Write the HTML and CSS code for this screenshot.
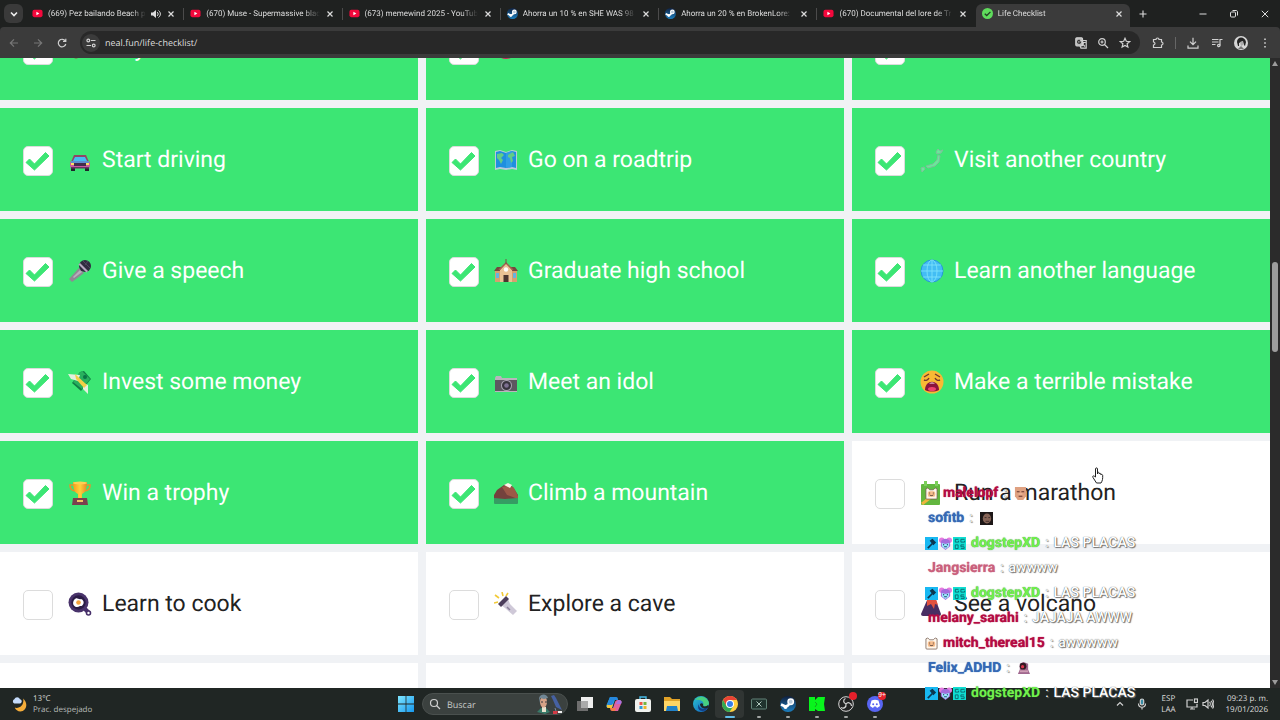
FILE: index.html
```html
<!DOCTYPE html>
<html lang="es">
<head>
<meta charset="utf-8">
<title>Life Checklist</title>
<link rel="stylesheet" href="styles.css">
</head>
<body>
<svg class="sprites" aria-hidden="true">
  <defs>
    <linearGradient id="gGold" x1="0" y1="0" x2="1" y2="0"><stop offset="0" stop-color="#f79a1c"/><stop offset=".5" stop-color="#ffd23a"/><stop offset="1" stop-color="#e8842a"/></linearGradient>
    <linearGradient id="gWin" x1="0" y1="0" x2="1" y2="1"><stop offset="0" stop-color="#7fe6ff"/><stop offset="1" stop-color="#1698ee"/></linearGradient>
    <linearGradient id="gSteam" x1="0" y1="0" x2="0" y2="1"><stop offset="0" stop-color="#10203f"/><stop offset="1" stop-color="#1b7fc0"/></linearGradient>
    <linearGradient id="gEdge" x1="0" y1="0" x2="1" y2="1"><stop offset="0" stop-color="#2bc3d2"/><stop offset="1" stop-color="#0f5cc0"/></linearGradient>
  </defs>
  <symbol id="yt" viewBox="0 0 12 12"><rect x="0.500" y="2" width="11" height="8" rx="2" fill="#f4083c"/><path d="M4.800 4.200 8 6 4.800 7.800z" fill="#fff"/></symbol>
  <symbol id="steam" viewBox="0 0 16 16"><circle cx="8" cy="8" r="8" fill="url(#gSteam)"/><path d="M1 8.500l4.500 2 2.500-1 2.500-3.500" stroke="#fff" stroke-width="2.600" fill="none"/><circle cx="10.700" cy="5.800" r="2.700" fill="#b8cbdc" stroke="#fff" stroke-width="1.500"/><circle cx="5.500" cy="11" r="2" fill="#fff"/></symbol>
  <symbol id="x" viewBox="0 0 12 12"><path d="M3.500 3.500l5 5m0-5l-5 5" stroke="#dcdcdc" stroke-width="1.200" fill="none"/></symbol>
  <symbol id="check" viewBox="0 0 30 30"><path d="M3 16.500l3.500-3.500 5 5L22.500 6.500 26 10 11.500 24z" fill="#3ce674" stroke="#3ce674" stroke-width="1" stroke-linejoin="round"/></symbol>
  <symbol id="violin" viewBox="0 0 24 24"><path d="M18 1l3 3-9 9-3-3z" fill="#3d2921"/><ellipse cx="8" cy="16" rx="5" ry="5.500" fill="#8b4b2b"/><path d="M17 20h5v-1h-5z" fill="#284638"/></symbol>
  <symbol id="heart" viewBox="0 0 24 24"><ellipse cx="12" cy="12" rx="11" ry="10" fill="#cf2159"/></symbol>
  <symbol id="train" viewBox="0 0 24 24"><rect x="1" y="3" width="22" height="18" rx="2" fill="#3aa0d8"/><path d="M18 18h4v2h-4z" fill="#e2b878"/></symbol>
  <symbol id="car" viewBox="0 0 24 24"><path d="M3 18h4v5H3zM17 18h4v5h-4z" fill="#20242c"/><path d="M6 7h12l3 7H3z" fill="#914665"/><path d="M7 9h10l2 4H5z" fill="#45bdf2"/><rect x="2" y="13" width="20" height="7" rx="2" fill="#c85a9f"/><path d="M3 13h18v2H3z" fill="#5e8fd0"/><path d="M6 15h12v3H6z" fill="#442c4d"/><path d="M3 15h3v2H3zM18 15h3v2h-3z" fill="#ffe062"/><path d="M3 19h18v1.500H3z" fill="#663564"/></symbol>
  <symbol id="map" viewBox="0 0 24 24"><path d="M1 3l5-1 6 2 6-2 5 1v19l-5-1-6 1-6-1-5 1z" fill="#b9cbd9"/><path d="M2 4l4-1 6 2 6-2 4 1v16l-4-1-6 1-6-1-4 1z" fill="#1e8fdf"/><path d="M12 5l6-2v16l-6 1z" fill="#2f9ee4"/><path d="M3 6l5-1 2 2-3 3 2 2-2 4-2-4-2-2zM14 7l5-3 2 4-3 1 1 4-2 2-1-5-2-1z" fill="#61cd86"/></symbol>
  <symbol id="islands" viewBox="0 0 24 24"><path d="M18 1l2 2 3-1-2 3-4 1-1-2zM18 7l2 1-1 6-4 4-7 2-2-2 7-2 4-4zM1 20l3-1 1 2-3 3z" fill="#6ae89a" stroke="#7fbf9a" stroke-width="1"/></symbol>
  <symbol id="mic" viewBox="0 0 24 24"><path d="M11 9l5 5-12 9-3-3z" fill="#8f8894"/><path d="M12 11l2 2-8 6-1-1z" fill="#b8aebc"/><circle cx="17" cy="7" r="6" fill="#302b40"/><path d="M12 4l8 8-1.500 1.500-8-8z" fill="#b7a9c1"/><path d="M15 2l7 7M20 2l-3 4" stroke="#4f4860"/></symbol>
  <symbol id="school" viewBox="0 0 24 24"><path d="M1 12h22v11H1z" fill="#d6a06f"/><path d="M0 12l3-4h7v4zM14 8h7l3 4h-8z" fill="#75473f"/><path d="M6 11l6-7 6 7v12H6z" fill="#eac194"/><path d="M5 11l7-7 7 7" fill="none" stroke="#a0604f" stroke-width="1.500"/><path d="M12 0v5" stroke="#775344"/><circle cx="12" cy="10.500" r="2.200" fill="#fff"/><path d="M9.500 16h5v7h-5z" fill="#4b342f"/><path d="M2 14h3v5H2zM19 14h3v5h-3z" fill="#66b2e0"/></symbol>
  <symbol id="globe" viewBox="0 0 24 24"><circle cx="12" cy="12" r="11" fill="#43bdf4" stroke="#2897d9"/><g fill="none" stroke="#7be0fb" stroke-width=".9"><ellipse cx="12" cy="12" rx="5" ry="11"/><path d="M12 1v22M1 12h22M3 6h18M3 18h18"/></g></symbol>
  <symbol id="money" viewBox="0 0 24 24"><path d="M12 2l4-1 7 8-10 12-9-8z" fill="#107e45"/><path d="M11 3l3-2 8 8-8 10-9-7z" fill="#28b15e"/><path d="M0 4l12 1-2 6-7-2zM15 13l5 2v9l-5-5z" fill="#e5efdf"/><path d="M7 4l12 11-3 3L8 9z" fill="#f2cf46"/><circle cx="17" cy="7" r="2" fill="#087545"/></symbol>
  <symbol id="camera" viewBox="0 0 24 24"><path d="M2 6h5l1 2h15v14H1V8z" fill="#b9b5bd"/><path d="M1 10h22v11H1z" fill="#5d5860"/><circle cx="12.500" cy="15.500" r="5.500" fill="#aaa4b2"/><circle cx="12.500" cy="15.500" r="4.500" fill="#37343d"/><circle cx="12.500" cy="15.500" r="2.300" fill="#7d7091"/></symbol>
  <symbol id="weary" viewBox="0 0 24 24"><circle cx="12" cy="12" r="11.500" fill="#f9b934"/><path d="M4 7l5-3M15 4l5 3M4 10c2 1 4 0 5-2M15 8c1 2 3 3 5 2" stroke="#70372f" stroke-width="1.400" fill="none"/><path d="M5 20c0-11 14-11 14 0-4 2-10 2-14 0" fill="#8a153c"/><path d="M9 13.500c2-1.500 4-1.500 6 0z" fill="#fff"/><ellipse cx="12" cy="19" rx="4" ry="2" fill="#ef416e"/></symbol>
  <symbol id="trophy" viewBox="0 0 24 24"><path d="M5 4H2c0 5 3 6 6 6m11-6h3c0 5-3 6-6 6" fill="none" stroke="#e3932e" stroke-width="1.600"/><path d="M5 1h14c0 9-3 11-5 12v4h-4v-4C8 12 5 10 5 1z" fill="url(#gGold)"/><ellipse cx="12" cy="2" rx="7" ry="1.500" fill="#ffce54"/><path d="M5 17h14l1 7H4z" fill="#7b414e"/><path d="M9 19h6v2H9z" fill="#f2c562"/></symbol>
  <symbol id="mountain" viewBox="0 0 24 24"><path d="M0 22V14l3-5 7-5 4-1 5 3 5 8v8z" fill="#74413d"/><path d="M8 6l7-2 5 3 4 8v3L13 14z" fill="#9c5847"/><path d="M10 4l4-2 4 2-2 3z" fill="#fff1e7"/><path d="M0 17l11 1 13-1v5q0 1-1 1H1q-1 0-1-1z" fill="#359c63"/></symbol>
  <symbol id="runner" viewBox="0 0 24 24"><rect x="1" y="3" width="19" height="21" rx="1" fill="#62b63f"/><path d="M2 23l9-7" stroke="#edb63d" stroke-width="3"/><path d="M4 0h3v5H4zM15 0h3v5h-3z" fill="#7bcf59"/></symbol>
  <symbol id="pan" viewBox="0 0 24 24"><path d="M17 17l4 4" stroke="#47306a" stroke-width="4"/><circle cx="20.500" cy="21" r="2" fill="#fff" stroke="#47306a" stroke-width="1.600"/><circle cx="10.500" cy="10.500" r="10" fill="#49336b"/><circle cx="10.500" cy="10.500" r="7.200" fill="#2b1c45"/><path d="M6 8c3-4 4 0 7-1 5 2 2 8-1 7-4 3-9-1-6-6" fill="#fff"/><circle cx="10.500" cy="10.500" r="2.300" fill="#f5a33c"/></symbol>
  <symbol id="torch" viewBox="0 0 24 24"><path d="M5 6L1 3M9 4L8 0M12 4l2-3M4 10l-4 1" stroke="#f2ca36" stroke-width="1.600"/><path d="M7 13l7-6 2 5 7 7-4 4-8-7z" fill="#cfc9d8"/><path d="M4 12l8-8 3 3-8 8z" fill="#4c3e5b"/><path d="M13 15l3 3" stroke="#8b819b" stroke-width="1.500"/></symbol>
  <symbol id="volcano" viewBox="0 0 24 24"><path d="M8 6h7l6 16q0 2-2 2H3q-2 0-2-2z" fill="#492e63"/><path d="M7 7c2-6 7-5 9 0l2 6-3-1-1 5-3-5-4 2z" fill="#e2523f"/></symbol>
  <symbol id="finn" viewBox="0 0 14 14"><path d="M1 2l2-1 2 2h4l2-2 2 1v10q0 1-1 1H2q-1 0-1-1z" fill="#fff7ec" stroke="#70584b" stroke-width=".8"/><rect x="3" y="4.500" width="8" height="6" rx="2" fill="#f8bd8c"/><path d="M5 6v1M9 6v1M5 8.500c1 1 3 1 4 0" stroke="#443432" fill="none"/></symbol>
  <symbol id="hammer" viewBox="0 0 14 14"><path d="M0 0h14v14H0z" fill="#18b8f2"/><path d="M3 12l5-5" stroke="#0b3650" stroke-width="1.800"/><path d="M5 4l3-2 4 4-3 3z" fill="#0b3650"/></symbol>
  <symbol id="bear" viewBox="0 0 14 14"><circle cx="3" cy="3.500" r="3" fill="#e67ae0"/><circle cx="11" cy="3.500" r="3" fill="#e67ae0"/><path d="M2 5c2-4 8-4 10 0v5l-5 4-5-4z" fill="#a46ddc"/><path d="M3 6.500l4 1 4-1-.5 4L7 13l-3.500-2.500z" fill="#9cecff"/><path d="M5 7.500V9M9 7.500V9M5.500 10.500h3" stroke="#203663"/></symbol>
  <symbol id="og" viewBox="0 0 14 14"><path d="M0 0h14v14H0z" fill="#10ded2"/><path d="M6 2.500H2.500v3H6v-1.500M12.500 2.500H8.500v3h4V4M2.500 8.500v4H5.500v-4zM12 8.500H8.500v2h3.500v2H8.500" fill="none" stroke="#0a6a70" stroke-width="1"/></symbol>
  <symbol id="emoteFace" viewBox="0 0 14 14"><path d="M1 0h12v10l-3 4H4L1 10z" fill="#dfa181"/><path d="M3 5h3M8 5h3M5 10h4" stroke="#64352e" stroke-width="1.100"/><path d="M5 7.500h4" stroke="#f7c5a6"/></symbol>
  <symbol id="emoteDark" viewBox="0 0 14 14"><path d="M0 0h14v14H0z" fill="#1d1717"/><ellipse cx="7.500" cy="7" rx="4.500" ry="5.500" fill="#866457"/><path d="M5 6h2M9 6h2M6 10h4" stroke="#3c2d2b"/></symbol>
  <symbol id="emotePurple" viewBox="0 0 14 14"><path d="M3 2l4-2 5 2v6l2 5H1l2-5z" fill="#a0688f"/><circle cx="6.500" cy="4.500" r="3.600" fill="#331923"/><circle cx="6" cy="5" r="1.700" fill="#df354e"/><path d="M3 10h9" stroke="#cf9eb5" stroke-width="2"/></symbol>
</svg>

<header class="browser">
  <div class="tabstrip">
    <button class="tab-search" aria-label="Buscar pestañas"><svg viewBox="0 0 12 12"><path d="M3 4.500l3 3 3-3" fill="none" stroke="#eee" stroke-width="1.600"/></svg></button>
    <nav class="tabs" aria-label="Pestañas">
      <div class="tab"><svg class="fav"><use href="#yt"/></svg><button class="title">(669) Pez bailando Beach pa</button><svg class="audio" viewBox="0 0 12 12"><path d="M2 4.500h2L7 2v8L4 7.500H2z" fill="#ddd"/><path d="M8 4c1.500 1 1.500 3 0 4M9.500 2.500c2.500 2 2.500 5 0 7" fill="none" stroke="#ddd"/></svg><button class="close" aria-label="Cerrar"><svg><use href="#x"/></svg></button><span class="divider"></span></div>
      <div class="tab"><svg class="fav"><use href="#yt"/></svg><button class="title">(670) Muse - Supermassive blac</button><button class="close" aria-label="Cerrar"><svg><use href="#x"/></svg></button><span class="divider"></span></div>
      <div class="tab"><svg class="fav"><use href="#yt"/></svg><button class="title">(673) memewind 2025 - YouTub</button><button class="close" aria-label="Cerrar"><svg><use href="#x"/></svg></button><span class="divider"></span></div>
      <div class="tab"><svg class="fav"><use href="#steam"/></svg><button class="title">Ahorra un 10 % en SHE WAS 98</button><button class="close" aria-label="Cerrar"><svg><use href="#x"/></svg></button><span class="divider"></span></div>
      <div class="tab"><svg class="fav"><use href="#steam"/></svg><button class="title">Ahorra un 20 % en BrokenLore:</button><button class="close" aria-label="Cerrar"><svg><use href="#x"/></svg></button><span class="divider"></span></div>
      <div class="tab"><svg class="fav"><use href="#yt"/></svg><button class="title">(670) Documental del lore de Tr</button><button class="close" aria-label="Cerrar"><svg><use href="#x"/></svg></button><span class="divider hidden"></span></div>
      <div class="tab active"><svg class="fav" viewBox="0 0 12 12"><circle cx="6" cy="6" r="6" fill="#5fdc5c"/><path d="M3 6.200l2.200 2 4-4" fill="none" stroke="#243c26" stroke-width="1.400"/></svg><button class="title">Life Checklist</button><button class="close" aria-label="Cerrar"><svg><use href="#x"/></svg></button></div>
    </nav>
    <button class="new-tab" aria-label="Nueva pestaña"><svg viewBox="0 0 12 12"><path d="M6 2.500v7M2.500 6h7" stroke="#ddd" stroke-width="1.100"/></svg></button>
    <div class="window-controls">
      <button aria-label="Minimizar"><svg viewBox="0 0 12 12"><path d="M2.500 6h7" stroke="#ddd"/></svg></button>
      <button aria-label="Restaurar"><svg viewBox="0 0 12 12"><rect x="2.500" y="4" width="5" height="5" rx="1" fill="none" stroke="#ddd"/><path d="M4.500 2.500H8c1 0 1.500.5 1.500 1.500v3.500" fill="none" stroke="#ddd"/></svg></button>
      <button aria-label="Cerrar ventana"><svg viewBox="0 0 12 12"><path d="M2.800 2.800l6.400 6.400m0-6.400L2.800 9.200" stroke="#ddd"/></svg></button>
    </div>
  </div>
  <div class="toolbar">
    <button class="tool dim" aria-label="Atrás"><svg viewBox="0 0 12 12"><path d="M10 6H2.500M6 2.300 2.300 6 6 9.700"/></svg></button>
    <button class="tool dim" aria-label="Adelante"><svg viewBox="0 0 12 12"><path d="M2 6h7.500M6 2.300 9.700 6 6 9.700"/></svg></button>
    <button class="tool" aria-label="Recargar"><svg viewBox="0 0 12 12"><path d="M9.300 4A3.800 3.800 0 1 0 9.800 7M9.800 1.800v2.700H7"/></svg></button>
    <div class="address">
      <button class="site" aria-label="Información del sitio"><svg viewBox="0 0 12 12"><circle cx="3.300" cy="3.500" r="1.400"/><path d="M6 3.500h4.500M1.500 8.500H6"/><circle cx="8.700" cy="8.500" r="1.400"/></svg></button>
      <input type="text" aria-label="Dirección" value="neal.fun/life-checklist/">
      <button class="tool" aria-label="Traducir"><svg viewBox="0 0 12 12"><rect x=".8" y=".8" width="6.700" height="8" rx="1" fill="#bbb"/><path d="M5.500 3.500h5.700v7.700H6l-1-2.400M7 5.500h3.500M8.700 4.800c0 2-1 3-2 4M7.500 7l2.500 2.500"/><path d="M5.500 4.800H4.200M5.600 4.800A1.500 1.500 0 1 1 5 3.600" stroke="#333"/></svg></button>
      <button class="tool" aria-label="Zoom"><svg viewBox="0 0 12 12"><circle cx="5" cy="5" r="3.300"/><path d="M7.500 7.500l3.500 3.500M5 3.500v3M3.500 5h3"/></svg></button>
      <button class="tool" aria-label="Favorito"><svg viewBox="0 0 12 12"><path d="M6 1.300l1.300 3 3.300.3-2.500 2.200.8 3.300L6 8.400l-2.900 1.700.8-3.300L1.400 4.600l3.300-.3z"/></svg></button>
    </div>
    <button class="tool" aria-label="Extensiones"><svg viewBox="0 0 12 12"><path d="M1.500 2.500H4c0-2 3-2 3 0h2.500V5c2 0 2 3 0 3v2.500h-8V8c2-.5 2-2.500 0-3z"/></svg></button>
    <span class="divider"></span>
    <button class="tool" aria-label="Descargas"><svg viewBox="0 0 12 12"><path d="M6 .8v6.500M3 4.600l3 3 3-3M1 8.500v2.700h10V8.500"/></svg></button>
    <button class="tool" aria-label="Multimedia"><svg viewBox="0 0 12 12"><path d="M1 2.500h6.500M1 5h6.500M1 7.500h3.500M9 8.500v-6h2.500"/><circle cx="7.800" cy="8.500" r="1.200"/></svg></button>
    <button class="tool avatar" aria-label="Perfil"><svg viewBox="0 0 14 14"><circle cx="7" cy="7" r="7" fill="#d6d6d6" stroke="none"/><path d="M3 6c0-6 8-6 9 0l-1 4-1-1-1-4-4 2v3H4z" fill="#252525" stroke="none"/><path d="M6 6l3-1v4l-2 1z" fill="#aaa" stroke="none"/><path d="M4 13l3-3 3 3z" fill="#777" stroke="none"/></svg></button>
    <button class="tool" aria-label="Menú"><svg viewBox="0 0 12 12"><path d="M6 1.500v1.600M6 5.200v1.600M6 8.900v1.600" stroke-width="1.600"/></svg></button>
  </div>
</header>

<main class="viewport">
  <div class="page">
    <div class="checklist">
      <label class="item"><span class="box"><input type="checkbox" checked><svg><use href="#check"/></svg></span><svg class="emoji"><use href="#violin"/></svg><span>Play an instrument</span></label>
      <label class="item"><span class="box"><input type="checkbox" checked><svg><use href="#check"/></svg></span><svg class="emoji"><use href="#heart"/></svg><span>Fall in love</span></label>
      <label class="item"><span class="box"><input type="checkbox" checked><svg><use href="#check"/></svg></span><svg class="emoji"><use href="#train"/></svg><span>Ride a train</span></label>
      <label class="item"><span class="box"><input type="checkbox" checked><svg><use href="#check"/></svg></span><svg class="emoji"><use href="#car"/></svg><span>Start driving</span></label>
      <label class="item"><span class="box"><input type="checkbox" checked><svg><use href="#check"/></svg></span><svg class="emoji"><use href="#map"/></svg><span>Go on a roadtrip</span></label>
      <label class="item"><span class="box"><input type="checkbox" checked><svg><use href="#check"/></svg></span><svg class="emoji"><use href="#islands"/></svg><span>Visit another country</span></label>
      <label class="item"><span class="box"><input type="checkbox" checked><svg><use href="#check"/></svg></span><svg class="emoji"><use href="#mic"/></svg><span>Give a speech</span></label>
      <label class="item"><span class="box"><input type="checkbox" checked><svg><use href="#check"/></svg></span><svg class="emoji"><use href="#school"/></svg><span>Graduate high school</span></label>
      <label class="item"><span class="box"><input type="checkbox" checked><svg><use href="#check"/></svg></span><svg class="emoji"><use href="#globe"/></svg><span>Learn another language</span></label>
      <label class="item"><span class="box"><input type="checkbox" checked><svg><use href="#check"/></svg></span><svg class="emoji"><use href="#money"/></svg><span>Invest some money</span></label>
      <label class="item"><span class="box"><input type="checkbox" checked><svg><use href="#check"/></svg></span><svg class="emoji"><use href="#camera"/></svg><span>Meet an idol</span></label>
      <label class="item"><span class="box"><input type="checkbox" checked><svg><use href="#check"/></svg></span><svg class="emoji"><use href="#weary"/></svg><span>Make a terrible mistake</span></label>
      <label class="item"><span class="box"><input type="checkbox" checked><svg><use href="#check"/></svg></span><svg class="emoji"><use href="#trophy"/></svg><span>Win a trophy</span></label>
      <label class="item"><span class="box"><input type="checkbox" checked><svg><use href="#check"/></svg></span><svg class="emoji"><use href="#mountain"/></svg><span>Climb a mountain</span></label>
      <label class="item"><span class="box"><input type="checkbox"><svg><use href="#check"/></svg></span><svg class="emoji"><use href="#runner"/></svg><span>Run a marathon</span></label>
      <label class="item"><span class="box"><input type="checkbox"><svg><use href="#check"/></svg></span><svg class="emoji"><use href="#pan"/></svg><span>Learn to cook</span></label>
      <label class="item"><span class="box"><input type="checkbox"><svg><use href="#check"/></svg></span><svg class="emoji"><use href="#torch"/></svg><span>Explore a cave</span></label>
      <label class="item"><span class="box"><input type="checkbox"><svg><use href="#check"/></svg></span><svg class="emoji"><use href="#volcano"/></svg><span>See a volcano</span></label>
      <div class="item"></div><div class="item"></div><div class="item"></div>
    </div>
  </div>
  <div class="scrollbar" aria-hidden="true">
    <svg viewBox="0 0 10 10"><path d="M5 3l3 5H2z" fill="#9b9b9b"/></svg>
    <span class="before"></span><span class="thumb"></span><span class="after"></span>
    <svg viewBox="0 0 10 10"><path d="M5 7L2 2h6z" fill="#9b9b9b"/></svg>
  </div>
</main>

<footer class="taskbar">
  <button class="weather">
    <svg viewBox="0 0 16 16"><path d="M12 2c6 6 3 14-3 14-3 0-5-2-6-4 6 1 10-3 9-10z" fill="#f5ad3a"/><path d="M2.500 7.500a2.400 2.400 0 0 1 0-4.500c1-3 5-3 6 0 2.500.5 2.500 4 0 4.500z" fill="#c4dafa"/></svg>
    <span>13°C<br><small>Prac. despejado</small></span>
  </button>
  <div class="dock">
    <button class="app" aria-label="Inicio"><svg viewBox="0 0 16 16"><path d="M0 0h7.600v7.600H0zM8.400 0H16v7.600H8.400zM0 8.400h7.600V16H0zM8.400 8.400H16V16H8.400z" fill="url(#gWin)"/></svg></button>
    <label class="search"><svg class="lens" viewBox="0 0 12 12"><circle cx="5" cy="5" r="3.500"/><path d="M7.500 7.500l3.500 3.500"/></svg><input type="text" placeholder="Buscar" aria-label="Buscar"><svg class="art" viewBox="0 0 28 20"><path d="M2 18l4-4h5l4 4-5 2z" fill="#397b6a"/><path d="M7 13h4v5H7z" fill="#e8e2ce"/><ellipse cx="8.500" cy="8" rx="3.500" ry="5.500" fill="#d7a287"/><path d="M4 9V4c2-5 8-4 9 0l-4 1-4-1z" fill="#718795"/><path d="M6 8h2m2 0h2" stroke="#393b41"/><path d="M16 2l3-1 2 3 6 12-6-3-3-7z" fill="#4661a2"/><path d="M20 14l1 3" stroke="#78849b"/><path d="M18 17h5l-1 3h-4z" fill="#d23b46"/><path d="M23 17h4v2h-4z" fill="#eee"/></svg></label>
    <button class="app" aria-label="Vista de tareas"><svg viewBox="0 0 16 16"><rect x="4" y="1" width="12" height="11" fill="#eee"/><rect y="5" width="11" height="10" fill="#777" opacity=".9"/><path d="M4 5h7v7H4z" fill="#aaa"/></svg></button>
    <button class="app" aria-label="Copilot"><svg viewBox="0 0 16 16"><path d="M4 1h6L6 12H3c-3 0-3-2-2-4z" fill="#26a5e4"/><path d="M1 8h6l-1 4H3c-3 0-2-2-2-4z" fill="#f4c63d"/><path d="M4 1h6c2 0 2 2 2 3H8L6 9H1z" fill="#2688dd"/><path d="M12 4c4 0 4 2 3 4l-3 7H6l3-9c.5-1 1-2 3-2z" fill="#e0619f"/><path d="M4 12h6l-1 3H6c-1 0-2-1-2-3z" fill="#f47a48"/><path d="M12 4c4 0 4 2 3 4h-5z" fill="#a972df"/></svg></button>
    <button class="app" aria-label="Tienda"><svg viewBox="0 0 16 16"><path d="M5 4V1h6v3" fill="none" stroke="#48bce7" stroke-width="1.400"/><rect x="0" y="3" width="16" height="13" rx="2" fill="#f0f2ef"/><path d="M4.500 6h3v3h-3z" fill="#ef5547"/><path d="M8.500 6h3v3h-3z" fill="#74b643"/><path d="M4.500 10h3v3h-3z" fill="#2f9bd5"/><path d="M8.500 10h3v3h-3z" fill="#eeb62c"/></svg></button>
    <button class="app" aria-label="Explorador"><svg viewBox="0 0 16 16"><path d="M0 1h6l2 2h8v12H0z" fill="#e1a227"/><path d="M0 5h16v10H0z" fill="#ffd565"/><path d="M3 10h10l1 5H2z" fill="#2182c9"/></svg></button>
    <button class="app" aria-label="Edge"><svg viewBox="0 0 16 16"><circle cx="8" cy="8" r="8" fill="url(#gEdge)"/><path d="M2 4C7-2 15 1 16 7c0 4-5 4-6 2 2-4-4-6-8-5z" fill="#48cf81"/><path d="M6 8c-1 5 5 6 9 3l-2 3C8 17 3 13 6 8z" fill="#133f87"/><path d="M7 8c2-2 4 0 3 2 2 1 4 0 5-1l1 2c-4 3-9 1-9-3z" fill="#202726"/></svg></button>
    <button class="app current" aria-label="Chrome"><svg viewBox="0 0 16 16"><circle cx="8" cy="8" r="8" fill="#ffce3e"/><path d="M1.100 4A8 8 0 0 1 15 4H8L4.500 10z" fill="#e94335"/><path d="M1.100 4A8 8 0 0 0 7.500 16l4-6H4.500z" fill="#32a754"/><circle cx="8" cy="8" r="4" fill="#fff"/><circle cx="8" cy="8" r="3" fill="#367ee8"/></svg></button>
    <button class="app open" aria-label="Consola"><svg viewBox="0 0 16 16"><rect x=".5" y="3" width="15" height="10" rx="1" fill="#20332e" stroke="#638378"/><path d="M5.500 5.500l5 5m0-5l-5 5" stroke="#b1c7bd"/></svg></button>
    <button class="app open" aria-label="Steam"><svg><use href="#steam"/></svg></button>
    <button class="app open" aria-label="Kick"><svg viewBox="0 0 16 16"><path d="M0 1h6v3l3-3h7l-1 7 1 7H9l-3-2v2H0z" fill="#08f51c"/><path d="M6 6l2 2-2 3" stroke="#14a51d" fill="none"/></svg></button>
    <button class="app open" aria-label="OBS"><svg viewBox="0 0 16 16"><circle cx="8" cy="8" r="7.300" fill="#222" stroke="#d7d7d7"/><path d="M8 8C5 7 5 3.500 7.500 2.500M8 8c2-2.500 5.500-1 5.500 2M8 8c.5 3.500-2.500 5-5 3.500" fill="none" stroke="#d7d7d7" stroke-width="1.200"/></svg><span class="badge"></span></button>
    <button class="app open" aria-label="Discord"><svg viewBox="0 0 16 16"><circle cx="8" cy="8" r="8" fill="#5865f2"/><path d="M4.500 4.500C7 3.500 9 3.500 11.500 4.500L13 10l-3 2-1-1.500H7L6 12l-3-2z" fill="#fff"/><circle cx="6.200" cy="8.200" r="1" fill="#5865f2"/><circle cx="9.800" cy="8.200" r="1" fill="#5865f2"/></svg><span class="badge">9+</span></button>
  </div>
  <div class="tray">
    <button aria-label="Iconos ocultos"><svg viewBox="0 0 12 12"><path d="M3 7.500l3-3 3 3"/></svg></button>
    <button aria-label="Micrófono"><svg viewBox="0 0 12 12"><rect x="4.300" y="1" width="3.400" height="6" rx="1.700" fill="#368ca6"/><path d="M2.500 5.500c0 5 7 5 7 0M6 9.500v2"/></svg></button>
    <button class="lang">ESP<br>LAA</button>
    <button class="status" aria-label="Red y volumen"><svg viewBox="0 0 12 12"><path d="M7 2H1v7h10V6M4 11h5M6 9v2"/><rect x="8.500" y="1" width="3" height="3.500"/></svg><svg viewBox="0 0 12 12"><path d="M1 4.500h2L6 2v8L3 7.500H1zM7.500 4c1 1 1 3 0 4M9 2.800c2 2 2 4.500 0 6.400M10.500 1.500c2 3 2 6 0 9"/></svg></button>
    <time class="clock">09:23 p. m.<br>19/01/2026</time>
  </div>
</footer>

<section class="chat" aria-label="Chat">
  <p><svg><use href="#finn"/></svg><b class="crimson">malelopf</b><i>:</i><svg class="emote"><use href="#emoteFace"/></svg></p>
  <p><b class="blue">sofitb</b><i>:</i><svg class="emote"><use href="#emoteDark"/></svg></p>
  <p><svg><use href="#hammer"/></svg><svg><use href="#bear"/></svg><svg><use href="#og"/></svg><b class="lime">dogstepXD</b><i>:</i><span>LAS PLACAS</span></p>
  <p><b class="rose">Jangsierra</b><i>:</i><span>awwww</span></p>
  <p><svg><use href="#hammer"/></svg><svg><use href="#bear"/></svg><svg><use href="#og"/></svg><b class="lime">dogstepXD</b><i>:</i><span>LAS PLACAS</span></p>
  <p><b class="crimson">melany_sarahi</b><i>:</i><span>JAJAJA AWWW</span></p>
  <p><svg><use href="#finn"/></svg><b class="crimson">mitch_thereal15</b><i>:</i><span>awwwww</span></p>
  <p><b class="blue">Felix_ADHD</b><i>:</i><svg class="emote"><use href="#emotePurple"/></svg></p>
  <p><svg><use href="#hammer"/></svg><svg><use href="#bear"/></svg><svg><use href="#og"/></svg><b class="lime">dogstepXD</b><i>:</i><span>LAS PLACAS</span></p>
</section>
<svg class="cursor" viewBox="0 0 12 17" aria-hidden="true"><path d="M3.500 10V2c0-1.500 2-1.500 2 0v5-1c0-1 1.700-1 1.700.3V7c0-1 1.700-1 1.700.3V8c0-1 1.800-.8 1.800.5 0 3 0 5-1.700 7.500H4.500L1 10.500c-1-1.500.7-2 1.300-1.300z" fill="#fff" stroke="#222"/></svg>
</body>
</html>
```
FILE: styles.css
```css
* { box-sizing: border-box; }

body {
  margin: 0;
  height: 100vh;
  display: flex;
  flex-direction: column;
  position: relative;
  overflow: hidden;
  background: #f0f2f5;
  color: #222;
  font-family: Roboto, "Liberation Sans", sans-serif;
  text-rendering: geometricPrecision;
}

button, input { font: inherit; color: inherit; text-rendering: inherit; border: 0; padding: 0; margin: 0; background: none; }
button { display: flex; align-items: center; justify-content: center; }
svg { display: block; flex: none; width: 12px; height: 12px; }
.sprites { position: absolute; width: 0; height: 0; }

/* Browser frame */
.browser, .taskbar { font-family: "Open Sans", "Noto Sans", sans-serif; color: #dedede; }
.browser { flex: none; background: #1f2120; font-size: 8px; }
.tabstrip { display: flex; height: 27px; font-family: Roboto, sans-serif; }
.tab-search { width: 19px; height: 19px; margin: 4px 3px 0 4px; border-radius: 6px; background: #3a3a3a; }
.tabs { flex: 1; min-width: 0; display: grid; grid-template-columns: repeat(7, minmax(0, 1fr)); }
.tab { min-width: 0; display: flex; align-items: center; padding-left: 6px; }
.fav { width: 11px; height: 11px; margin-right: 5px; }
.title {
  flex: 1;
  min-width: 0;
  justify-content: flex-start;
  overflow: hidden;
  white-space: nowrap;
  line-height: 16px;
  mask-image: linear-gradient(to right, #000 85%, transparent);
}
.audio { margin: 0 4px 0 3px; }
.close { width: 12px; margin-left: 4px; margin-right: 6px; }
.audio + .close { margin-left: 0; }
.divider { width: 1px; height: 12px; background: #4b4b4b; }
.hidden { visibility: hidden; }
.active { background: #3b3b3b; margin: 4px 4px 0 0; padding-bottom: 4px; border-radius: 6px 6px 0 0; }
.active .close { margin-right: 5px; }
.new-tab { width: 18px; }
.window-controls { display: flex; margin-left: 35px; }
.window-controls button { width: 31px; }

.toolbar { display: flex; align-items: center; height: 31px; padding: 0 3px 0 2px; background: #3b3b3b; border-radius: 4px 4px 0 0; }
.tool { width: 24px; height: 24px; flex: none; }
.tool svg, .site svg, .tray svg, .lens { fill: none; stroke: #d0d0d0; stroke-width: 1.2; }
.dim svg { stroke: #777; }
.toolbar > .divider { margin: 0 5px; background: #666; }
.avatar svg { width: 14px; height: 14px; }
.address {
  flex: 1;
  min-width: 0;
  display: flex;
  align-items: center;
  height: 23px;
  margin: 0 6px;
  padding: 0 4px 0 2px;
  border-radius: 12px;
  background: #282828;
  font-size: 9px;
}
.address input { flex: 1; min-width: 0; margin-left: 5px; outline: none; }
.address .tool { width: 22px; }
.site { width: 18px; height: 18px; border-radius: 9px; background: #3b3b3b; }

/* Page */
.viewport { flex: 1; min-height: 0; display: flex; overflow: hidden; }
.page { flex: 1; min-width: 0; overflow: hidden; }
.checklist {
  display: grid;
  grid-template-columns: repeat(3, minmax(0, 1fr));
  grid-auto-rows: 103px;
  gap: 8px;
  margin-top: -61px;
}
.item {
  display: flex;
  align-items: center;
  padding: 0 23px;
  background: #fff;
  font-size: 23px;
  line-height: 28px;
  white-space: nowrap;
}
.item:has(:checked) { background: #3ce674; color: #fff; }
.box { display: grid; margin: 3px 15px 0 0; }
.box > * { grid-area: 1 / 1; width: 30px; height: 30px; }
.box input { appearance: none; border: 1px solid #dcdcdc; border-radius: 5px; background: #fff; }
.box svg { visibility: hidden; pointer-events: none; }
.box input:checked + svg { visibility: visible; }
.emoji { width: 24px; height: 24px; margin-right: 10px; }

.scrollbar { width: 10px; flex: none; display: flex; flex-direction: column; align-items: center; background: #2b2b2b; }
.scrollbar svg { width: 10px; height: 10px; }
.before { flex: 194; }
.thumb { flex: 90; width: 6px; border-radius: 3px; background: #9d9d9d; }
.after { flex: 326; }

/* Taskbar */
.taskbar {
  flex: none;
  height: 32px;
  display: grid;
  grid-template-columns: 1fr auto 1fr;
  align-items: stretch;
  background: #202624;
  font-size: 8px;
  line-height: 11px;
}
.weather { justify-self: start; padding-left: 12px; gap: 6px; text-align: left; }
.weather svg { width: 15px; height: 16px; }
.weather small { font-size: 8px; color: #b8bcba; }
.dock { display: flex; align-items: center; }
.app { position: relative; width: 29px; height: 28px; border-radius: 4px; }
.app svg { width: 16px; height: 16px; }
.search {
  display: flex;
  align-items: center;
  width: 146px;
  height: 22px;
  margin: 0 2px;
  padding: 0 4px 0 6px;
  border-radius: 11px;
  border: 1px solid #4a504e;
  background: #3b413f;
}
.search input { flex: 1; min-width: 0; margin-left: 6px; outline: none; font-size: 9px; }
.search input::placeholder { color: #c8cbca; opacity: 1; }
.search .art { width: 28px; height: 20px; }
.current { background: #303533; }
.current::after, .open::after {
  content: "";
  position: absolute;
  bottom: 0;
  left: 50%;
  width: 4px;
  height: 2px;
  border-radius: 1px;
  background: #a2a6a4;
  transform: translateX(-50%);
}
.current::after { width: 10px; background: #62bde9; }
.badge {
  position: absolute;
  top: 2px;
  right: 3px;
  min-width: 8px;
  height: 8px;
  border-radius: 4px;
  background: #e5202b;
  color: #fff;
  font-size: 7px;
  line-height: 8px;
}
.tray { display: flex; justify-content: flex-end; padding-right: 12px; }
.tray button:not(.lang, .status) { width: 22px; }
.tray .lang { margin-left: 8px; }
.tray .status { gap: 4px; margin: 0 12px 0 10px; }
.clock { align-self: center; text-align: right; }

/* Stream overlay */
.chat {
  position: absolute;
  right: 140px;
  bottom: 14px;
  width: 216px;
  font-size: 14px;
  line-height: 25px;
  color: #fff;
  text-shadow: 0 0 1px #333, 1px 1px 1px #777;
  white-space: nowrap;
}
.chat p { display: flex; align-items: center; height: 25px; margin: 0; }
.chat svg { width: 13px; height: 13px; margin-left: 1px; }
.chat b { margin-left: 4px; text-shadow: 0 0 1px currentColor; }
.chat svg + b { margin-left: 5px; }
.chat span { font-weight: 500; }
.chat i { font-style: normal; margin: 0 5px; }
.chat .emote { margin-left: 2px; }
.crimson { color: #b40b43; }
.blue { color: #3569b5; }
.lime { color: #72f04e; }
.rose { color: #ca607d; }
.chat .lime { text-shadow: 0 0 1px #277d20; }

.cursor { position: absolute; top: 467px; left: 1092px; width: 12px; height: 17px; }
```
